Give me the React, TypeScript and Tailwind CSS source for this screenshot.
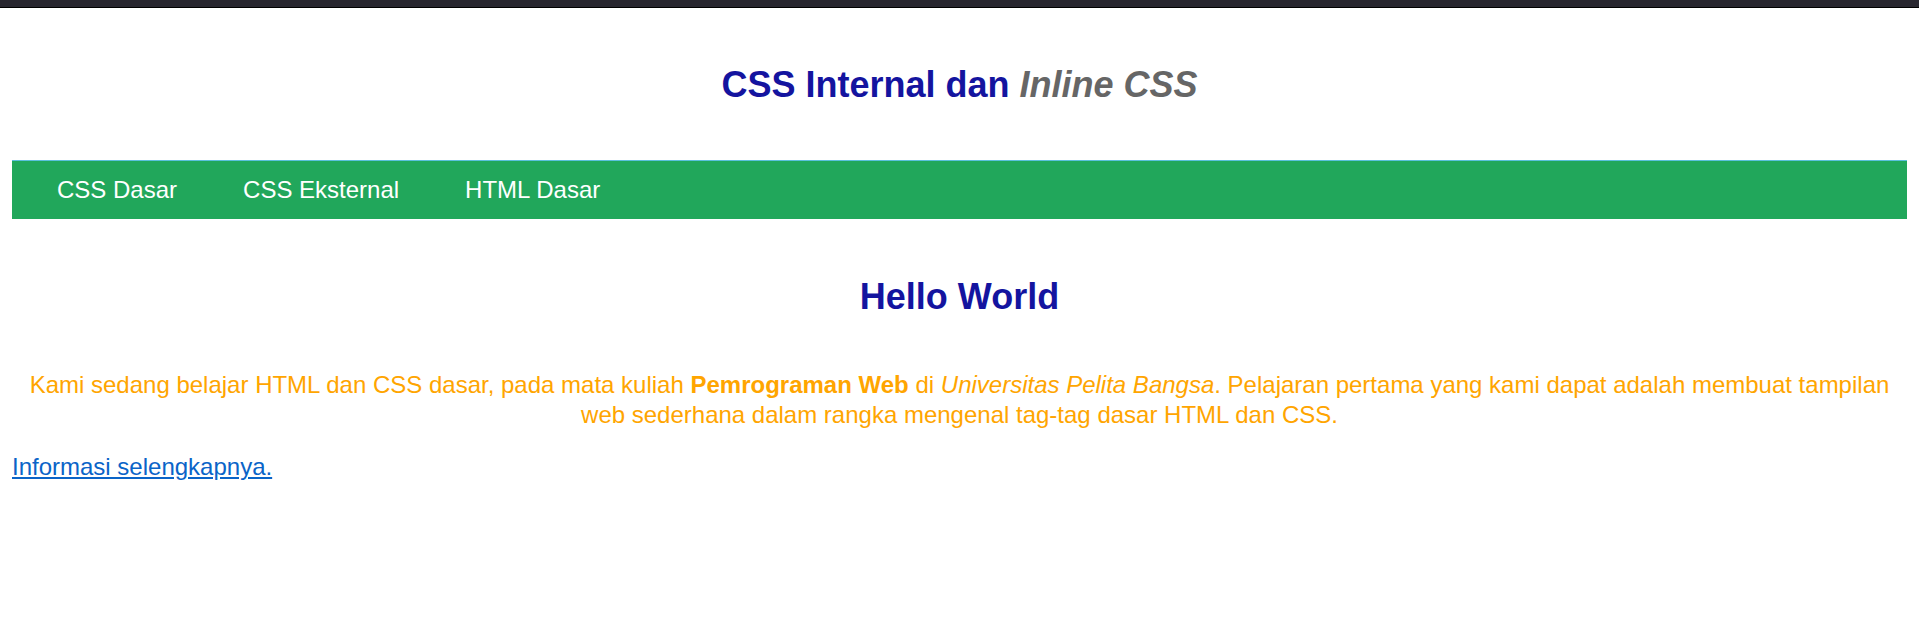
export default function App() {
  const links = ['CSS Dasar', 'CSS Eksternal', 'HTML Dasar'];

  return (
    <div className="min-h-screen bg-white font-['Liberation_Sans',Arial,sans-serif] text-[24px]">
      <div className="h-[8px] border-b border-black bg-[#28262f]" />

      <div className="px-[12px]">
        <h1 className="mt-[56px] text-center text-[36px] font-bold leading-[41px] text-[#14149f]">
          CSS Internal dan <em className="text-[#666666]">Inline CSS</em>
        </h1>

        <nav className="mt-[55px] flex h-[59px] items-center border-t border-[#5bc0de] bg-[#21a75b] pl-[12px]">
          {links.map((label) => (
            <a key={label} href="#" className="px-[33px] leading-[28px] text-white">
              {label}
            </a>
          ))}
        </nav>

        <h2 className="mt-[57px] text-center text-[36px] font-bold leading-[41px] text-[#14149f]">
          Hello World
        </h2>

        <p className="mt-[53px] text-center leading-[30px] text-[#ffa500]">
          Kami sedang belajar HTML dan CSS dasar, pada mata kuliah <b>Pemrograman Web</b> di{' '}
          <i>Universitas Pelita Bangsa</i>. Pelajaran pertama yang kami dapat adalah membuat tampilan web
          sederhana dalam rangka mengenal tag-tag dasar HTML dan CSS.
        </p>

        <p className="mt-[23px] leading-[28px]">
          <a href="#" className="text-[#0a64c8] underline">
            Informasi selengkapnya.
          </a>
        </p>
      </div>
    </div>
  );
}
